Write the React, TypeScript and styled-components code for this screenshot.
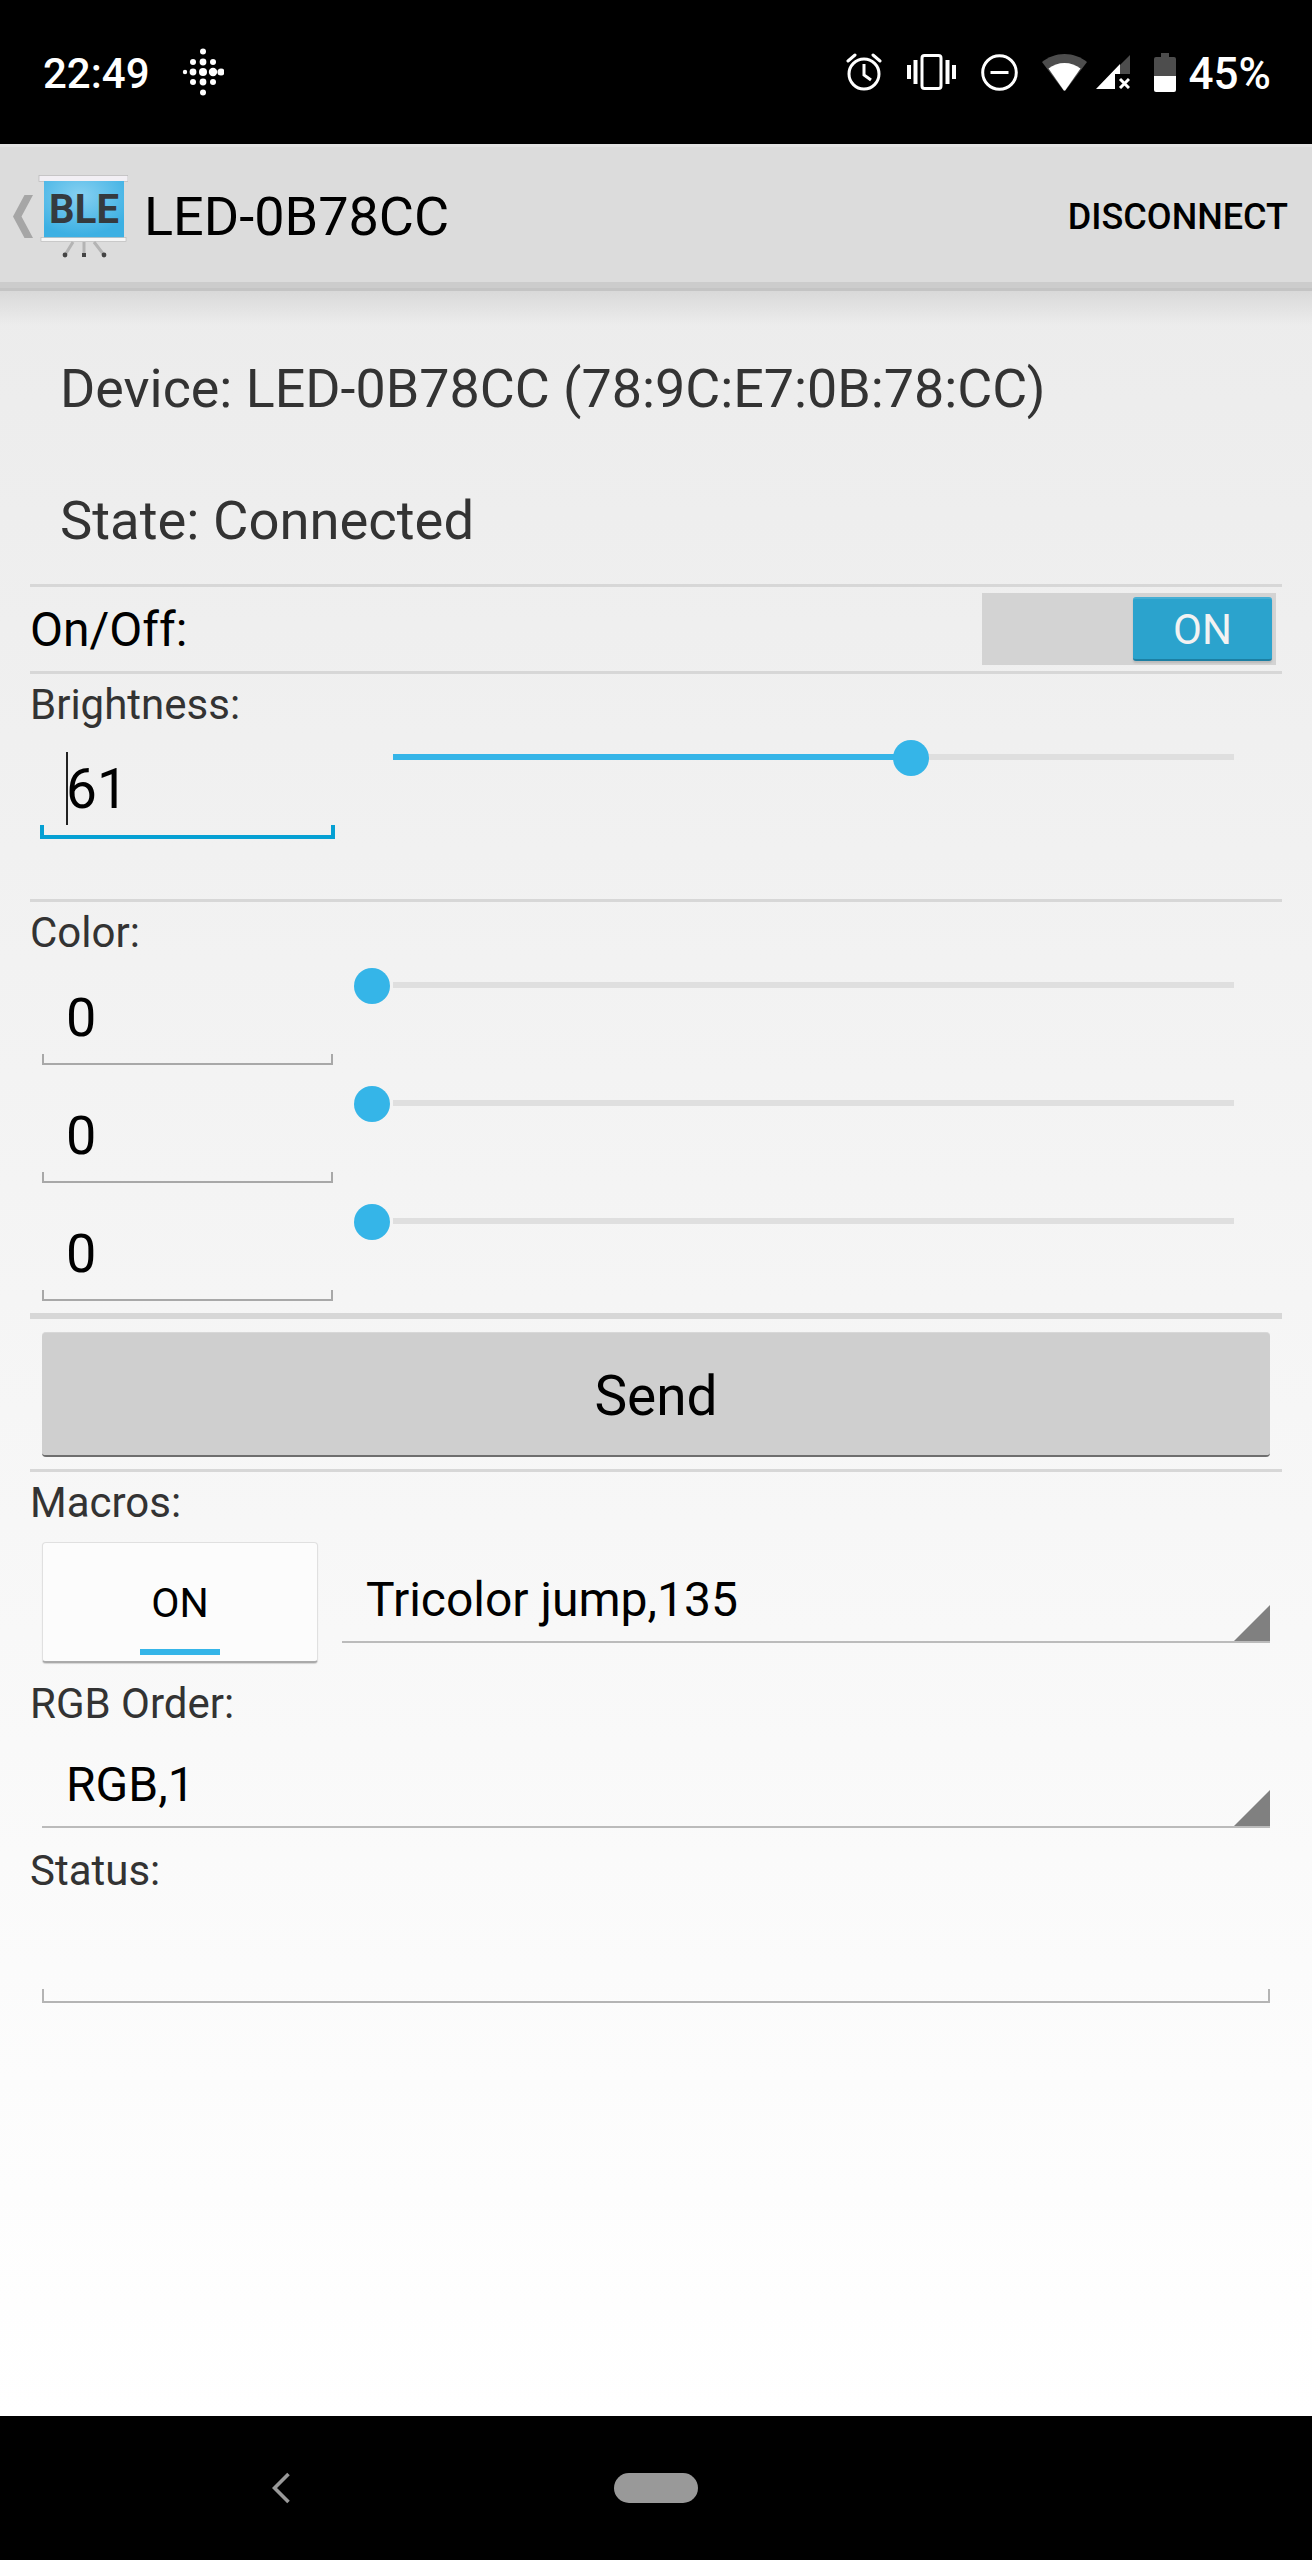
import React from "react";
import styled, { createGlobalStyle } from "styled-components";

const Global = createGlobalStyle`
  html, body { margin: 0; padding: 0; background: #fff; }
  * { box-sizing: border-box; }
  body { font-family: Roboto, "Liberation Sans", sans-serif; }
`;

const Screen = styled.div`
  width: 1312px;
  height: 2560px;
  display: flex;
  flex-direction: column;
  overflow: hidden;
`;

const StatusBar = styled.header`
  height: 144px;
  background: #000;
  color: #fff;
  display: flex;
  align-items: center;
  padding: 0 41px 0 43px;
  flex: none;
`;
const StatusTime = styled.span`
  font-size: 42px;
  font-weight: 500;
  padding-top: 3px;
`;
const StatusIcons = styled.div`
  margin-left: auto;
  display: flex;
  align-items: center;
`;
const StatusIcon = styled.svg<{ $gap?: number }>`
  display: block;
  flex: none;
  margin-left: ${(p) => p.$gap ?? 0}px;
`;
const Battery = styled.span`
  font-size: 44px;
  font-weight: 500;
  margin-left: 13px;
  padding-top: 3px;
`;

const ActionBar = styled.div`
  height: 138px;
  flex: none;
  background: #dcdcdc;
  border-top: 3px solid #e3e3e3;
  display: flex;
  align-items: center;
  padding: 0 24px 0 13px;
  color: #000;
`;
const ChevronSvg = styled.svg`
  display: block;
  flex: none;
  margin: 3px -31px 0 0;
`;
const AppIconSvg = styled.svg`
  display: block;
  flex: none;
  margin: 8px 0 0 11px;
`;
const ActionTitle = styled.span`
  font-size: 54px;
  margin-left: 16px;
  padding-top: 4px;
`;
const ActionButton = styled.span`
  margin-left: auto;
  font-size: 36px;
  font-weight: 500;
  padding-top: 4px;
`;
const ActionEdge = styled.div`
  height: 9px;
  flex: none;
  background: linear-gradient(#cccccc 0, #cccccc 6px, #c4c4c4 6px, #c4c4c4 9px);
`;

const Content = styled.main`
  flex: 1;
  min-height: 0;
  padding: 0 30px;
  background:
    linear-gradient(#d9d9d9, rgba(236, 236, 236, 0)) top / 100% 34px no-repeat,
    linear-gradient(#ececec, #ffffff);
  display: flex;
  flex-direction: column;
`;

const InfoLine = styled.div<{ $h: number; $size: number }>`
  height: ${(p) => p.$h}px;
  display: flex;
  align-items: center;
  font-size: ${(p) => p.$size}px;
  color: #333;
  padding-left: 30px;
  flex: none;
`;

const Divider = styled.div<{ $h?: number; $mt?: number }>`
  height: ${(p) => p.$h ?? 3}px;
  margin-top: ${(p) => p.$mt ?? 0}px;
  background: #d7d7d7;
  flex: none;
`;

const ToggleRow = styled.div`
  height: 84px;
  flex: none;
  display: flex;
  align-items: center;
  justify-content: space-between;
  padding-right: 6px;
`;
const ToggleLabel = styled.span`
  font-size: 48px;
  color: #000;
`;
const ToggleTrack = styled.div`
  width: 294px;
  height: 72px;
  background: #d3d3d3;
  display: flex;
  align-items: center;
  justify-content: flex-end;
  padding-right: 4px;
`;
const ToggleThumb = styled.div`
  width: 139px;
  height: 64px;
  background: #2ba3cd;
  border-top: 2px solid #45aed4;
  border-bottom: 2px solid #1c7fa3;
  border-radius: 3px;
  color: #f2f2f2;
  font-size: 42px;
  display: flex;
  align-items: center;
  justify-content: center;
  box-shadow: 0 2px 2px rgba(0, 0, 0, 0.12);
`;

const SectionLabel = styled.div<{ $h: number }>`
  height: ${(p) => p.$h}px;
  flex: none;
  font-size: 42px;
  color: #333;
  display: flex;
  align-items: center;
`;

const SliderRow = styled.div<{ $h: number; $pl: number }>`
  height: ${(p) => p.$h}px;
  flex: none;
  display: flex;
  align-items: flex-start;
  padding-left: ${(p) => p.$pl}px;
`;

const NumberField = styled.div<{ $focused?: boolean }>`
  width: ${(p) => (p.$focused ? 295 : 291)}px;
  height: ${(p) => (p.$focused ? 96 : 93)}px;
  align-self: flex-end;
  flex: none;
  position: relative;
  font-size: ${(p) => (p.$focused ? 55 : 54)}px;
  color: #000;
  padding-left: ${(p) => (p.$focused ? 26 : 24)}px;
  display: flex;
  align-items: center;
  border-bottom: ${(p) => (p.$focused ? "4px solid #05a0d3" : "2px solid #a8a8a8")};
  &::before,
  &::after {
    content: "";
    position: absolute;
    bottom: 0;
    width: ${(p) => (p.$focused ? 4 : 2)}px;
    height: ${(p) => (p.$focused ? 10 : 9)}px;
    background: ${(p) => (p.$focused ? "#05a0d3" : "#a8a8a8")};
  }
  &::before { left: 0; }
  &::after { right: 0; }
`;
const Caret = styled.span`
  position: absolute;
  left: 26px;
  bottom: 10px;
  width: 2px;
  height: 73px;
  background: #222;
`;

const SliderTrack = styled.div<{ $ml: number; $top: number }>`
  position: relative;
  flex: none;
  width: 841px;
  height: 6px;
  margin-left: ${(p) => p.$ml}px;
  margin-top: ${(p) => p.$top}px;
  background: #dfdfdf;
`;
const SliderFill = styled.div`
  position: absolute;
  left: 0;
  top: 0;
  height: 6px;
  background: #35b5e8;
`;
const SliderThumb = styled.div`
  position: absolute;
  top: -14px;
  width: 36px;
  height: 36px;
  margin-left: -18px;
  border-radius: 50%;
  background: #35b5e8;
`;

const SendWrap = styled.div`
  height: 150px;
  flex: none;
  padding: 13px 12px 12px;
`;
const SendButton = styled.div`
  height: 125px;
  background: #cfcfcf;
  border-top: 1px solid #d8d8d8;
  border-bottom: 2px solid #6e6e6e;
  border-radius: 4px;
  font-size: 55px;
  color: #000;
  display: flex;
  align-items: center;
  justify-content: center;
  padding-top: 3px;
`;

const MacroRow = styled.div`
  height: 121px;
  flex: none;
  margin-top: 10px;
  padding: 0 12px;
  display: flex;
  align-items: flex-start;
`;
const MacroButton = styled.div`
  width: 276px;
  height: 121px;
  flex: none;
  position: relative;
  background: #fcfcfc;
  border: 1px solid #e0e0e0;
  border-bottom: 2px solid #aaa;
  border-radius: 4px;
  box-shadow: 0 1px 1px rgba(0, 0, 0, 0.15);
  font-size: 41px;
  color: #000;
  display: flex;
  align-items: flex-start;
  justify-content: center;
  padding-top: 36px;
  line-height: 48px;
`;
const MacroIndicator = styled.span`
  position: absolute;
  left: 97px;
  bottom: 6px;
  width: 80px;
  height: 6px;
  background: #35b5e8;
`;

const Spinner = styled.div<{ $ml: number; $h: number; $pt: number }>`
  position: relative;
  margin-left: ${(p) => p.$ml}px;
  height: ${(p) => p.$h}px;
  flex: 1;
  border-bottom: 2px solid #bbb;
  font-size: 48px;
  color: #000;
  display: flex;
  align-items: center;
  padding-left: 24px;
  padding-top: ${(p) => p.$pt}px;
  &::after {
    content: "";
    position: absolute;
    right: 0;
    bottom: 0;
    width: 36px;
    height: 36px;
    background: #808080;
    clip-path: polygon(100% 0, 100% 100%, 0 100%);
  }
`;
const InsetRow = styled.div<{ $h: number }>`
  height: ${(p) => p.$h}px;
  flex: none;
  padding: 0 12px;
  display: flex;
`;
const StatusField = styled.div`
  flex: 1;
  position: relative;
  border-bottom: 2px solid #b4b4b4;
  &::before,
  &::after {
    content: "";
    position: absolute;
    bottom: 0;
    width: 2px;
    height: 12px;
    background: #b4b4b4;
  }
  &::before { left: 0; }
  &::after { right: 0; }
`;

const NavBar = styled.footer`
  height: 144px;
  flex: none;
  background: #000;
  display: flex;
  align-items: center;
  padding-left: 272px;
`;
const BackSvg = styled.svg`
  display: block;
`;
const NavHome = styled.div`
  width: 84px;
  height: 30px;
  margin-left: 324px;
  border-radius: 15px;
  background: #999;
`;

const BoardText = styled.text`
  font-family: Roboto, "Liberation Sans", sans-serif;
  font-weight: 700;
  font-size: 40px;
`;

const FitbitIcon = () => {
  const dots: [number, number, number][] = [
    [21, 3.5, 3],
    [11, 14, 3], [21, 14, 3.4], [31, 14, 3],
    [3, 24, 2.2], [11, 24, 3.4], [21, 24, 4], [31, 24, 4.2], [39, 24, 3.6],
    [11, 34, 3], [21, 34, 3.4], [31, 34, 3],
    [21, 44.5, 3],
  ];
  return (
    <StatusIcon $gap={32} width="42" height="48" viewBox="0 0 42 48" fill="#fff">
      {dots.map(([x, y, r]) => (
        <circle key={`${x}-${y}`} cx={x} cy={y} r={r} />
      ))}
    </StatusIcon>
  );
};

const AlarmIcon = () => (
  <StatusIcon width="36" height="38" viewBox="0 0 36 38" fill="none" stroke="#fff" strokeWidth="3">
    <circle cx="18" cy="21" r="15" />
    <path d="M18 11v11l7 5" />
    <path d="M9 2 2 8M27 2l7 6" strokeLinecap="round" />
  </StatusIcon>
);
const VibrateIcon = () => (
  <StatusIcon $gap={25} width="49" height="36" viewBox="0 0 49 36" fill="none">
    <rect x="15" y="1.5" width="19" height="33" rx="2.5" stroke="#fff" strokeWidth="3" />
    <path d="M0 11h4v14H0zM6.500 6h4v24h-4zM38.500 6h4v24h-4zM45 11h4v14h-4z" fill="#fff" />
  </StatusIcon>
);
const DndIcon = () => (
  <StatusIcon $gap={25} width="37" height="37" viewBox="0 0 37 37" fill="none" stroke="#fff" strokeWidth="3">
    <circle cx="18.500" cy="18.500" r="16.800" />
    <path d="M9.500 18.500h18" />
  </StatusIcon>
);
const WifiIcon = () => (
  <StatusIcon $gap={24} width="45" height="37" viewBox="0 0 45 37" fill="none">
    <path d="M22.500 0C14 0 6 3 0 8l21.500 28.500a1.300 1.300 0 0 0 2 0L45 8C39 3 31 0 22.500 0Z" fill="#4d4d4d" />
    <path d="M22.500 9c-6 0-11.500 2-16 5.500l15 21.500a1.300 1.300 0 0 0 2 0l15-21.500C34 11 28.500 9 22.500 9Z" fill="#fff" />
  </StatusIcon>
);
const SignalIcon = () => (
  <StatusIcon $gap={9} width="34" height="34" viewBox="0 0 34 34" fill="none">
    <path d="M34 0v19H24V10Z" fill="#4d4d4d" />
    <path d="M24 9V19H19V34H0Z" fill="#fff" />
    <path d="M24 24l9 9M33 24l-9 9" stroke="#fff" strokeWidth="3" />
  </StatusIcon>
);
const BatteryIcon = () => (
  <StatusIcon $gap={24} width="22" height="39" viewBox="0 0 22 39" fill="none">
    <path d="M7 0h8v4h5a2 2 0 0 1 2 2v18H0V6a2 2 0 0 1 2-2h5Z" fill="#4d4d4d" />
    <path d="M0 23h22v14a2 2 0 0 1-2 2H2a2 2 0 0 1-2-2Z" fill="#fff" />
  </StatusIcon>
);

const AppIcon = () => (
  <AppIconSvg width="115" height="88" viewBox="0 0 115 88">
    <defs>
      <radialGradient id="boardFill" cx="45%" cy="25%" r="70%">
        <stop offset="0" stopColor="#86d0f1" />
        <stop offset="1" stopColor="#3cb0e3" />
      </radialGradient>
    </defs>
    <rect x="26" y="0.500" width="89" height="6" fill="#f2eff4" stroke="#bdbdbd" strokeWidth="0.8" />
    <rect x="31" y="6" width="80" height="57" fill="url(#boardFill)" />
    <rect x="28" y="62.500" width="85" height="4" fill="#f6f6f6" stroke="#b5b5b5" strokeWidth="0.6" />
    <BoardText x="36" y="48" fill="#353a3e" textLength="70">BLE</BoardText>
    <path d="M60 67 52 80M71 67v14M81 67l10 13" stroke="#b4b4b4" strokeWidth="3" />
    <circle cx="52" cy="80" r="2.400" fill="#444" />
    <rect x="69" y="78" width="4" height="4" fill="#444" />
    <circle cx="91" cy="80" r="2.400" fill="#444" />
  </AppIconSvg>
);
const ChevronIcon = () => (
  <ChevronSvg width="20" height="43" viewBox="0 0 20 43">
    <path d="M20 0 8.500 21.500 20 43H11.500L0 21.500 11.500 0Z" fill="#a6a6a6" />
  </ChevronSvg>
);
const BackIcon = () => (
  <BackSvg width="18" height="32" viewBox="0 0 18 32" fill="none">
    <path d="M16.500 2 2.500 16l14 14" stroke="#999" strokeWidth="3.600" />
  </BackSvg>
);

const colorRows = [
  { h: 103, top: 20 },
  { h: 118, top: 35 },
  { h: 118, top: 35 },
];

export default function App() {
  return (
    <Screen>
      <Global />
      <StatusBar>
        <StatusTime>22:49</StatusTime>
        <FitbitIcon />
        <StatusIcons>
          <AlarmIcon />
          <VibrateIcon />
          <DndIcon />
          <WifiIcon />
          <SignalIcon />
          <BatteryIcon />
          <Battery>45%</Battery>
        </StatusIcons>
      </StatusBar>
      <ActionBar>
        <ChevronIcon />
        <AppIcon />
        <ActionTitle>LED-0B78CC</ActionTitle>
        <ActionButton>DISCONNECT</ActionButton>
      </ActionBar>
      <ActionEdge />
      <Content>
        <InfoLine $h={194} $size={53.8}>Device: LED-0B78CC (78:9C:E7:0B:78:CC)</InfoLine>
        <InfoLine $h={70} $size={54.4}>State: Connected</InfoLine>
        <Divider $mt={29} />
        <ToggleRow>
          <ToggleLabel>On/Off:</ToggleLabel>
          <ToggleTrack>
            <ToggleThumb>ON</ToggleThumb>
          </ToggleTrack>
        </ToggleRow>
        <Divider />
        <SectionLabel $h={60}>Brightness:</SectionLabel>
        <SliderRow $h={105} $pl={10}>
          <NumberField $focused>
            61
            <Caret />
          </NumberField>
          <SliderTrack $ml={58} $top={20}>
            <SliderFill style={{ width: 518 }} />
            <SliderThumb style={{ left: 518 }} />
          </SliderTrack>
        </SliderRow>
        <Divider $mt={60} />
        <SectionLabel $h={60}>Color:</SectionLabel>
        {colorRows.map((row, i) => (
          <SliderRow key={i} $h={row.h} $pl={12}>
            <NumberField>0</NumberField>
            <SliderTrack $ml={60} $top={row.top}>
              <SliderThumb style={{ left: -21 }} />
            </SliderTrack>
          </SliderRow>
        ))}
        <Divider $h={6} $mt={12} />
        <SendWrap>
          <SendButton>Send</SendButton>
        </SendWrap>
        <Divider />
        <SectionLabel $h={60}>Macros:</SectionLabel>
        <MacroRow>
          <MacroButton>
            ON
            <MacroIndicator />
          </MacroButton>
          <Spinner $ml={24} $h={101} $pt={15}>Tricolor jump,135</Spinner>
        </MacroRow>
        <SectionLabel $h={80}>RGB Order:</SectionLabel>
        <InsetRow $h={85}>
          <Spinner $ml={0} $h={85} $pt={0}>RGB,1</Spinner>
        </InsetRow>
        <SectionLabel $h={84}>Status:</SectionLabel>
        <InsetRow $h={91}>
          <StatusField />
        </InsetRow>
      </Content>
      <NavBar>
        <BackIcon />
        <NavHome />
      </NavBar>
    </Screen>
  );
}
